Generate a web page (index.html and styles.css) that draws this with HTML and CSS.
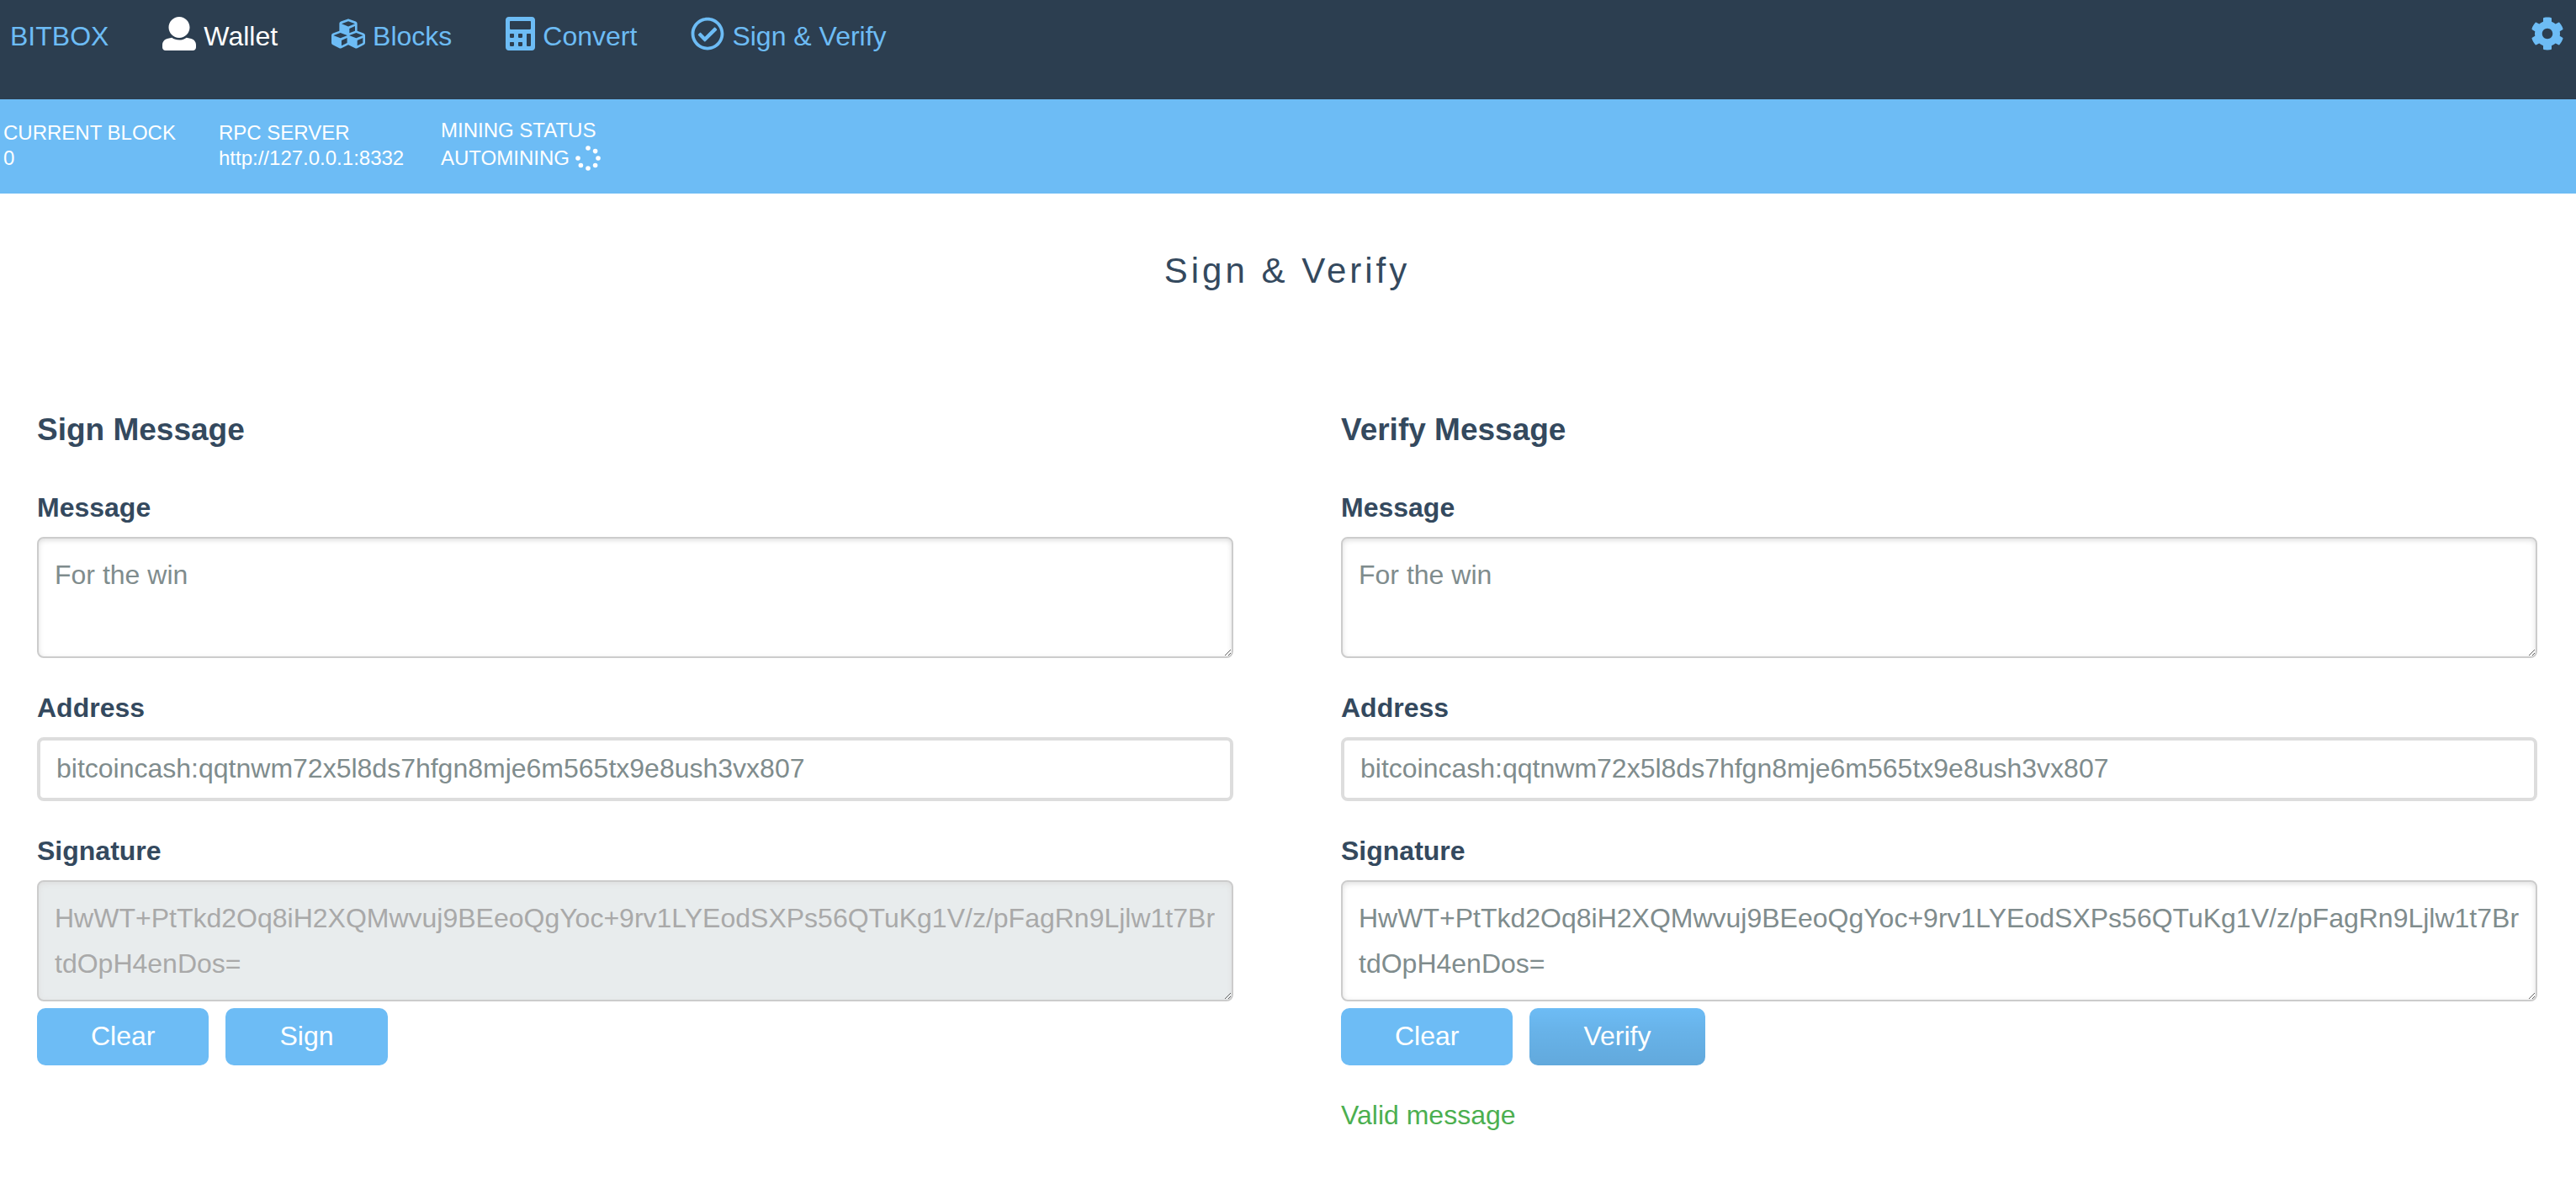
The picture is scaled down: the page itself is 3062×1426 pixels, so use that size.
FILE: index.html
```html
<!DOCTYPE html>
<html lang="en">
<head>
  <meta charset="utf-8">
  <meta name="viewport" content="width=device-width, initial-scale=1">
  <title>BITBOX - Sign &amp; Verify</title>
  <link rel="stylesheet" href="styles.css">
</head>
<body>
  <nav class="nav" aria-label="Main">
    <ul class="nav-list">
      <li><a class="nav-link" href="#home">BITBOX</a></li>
      <li>
        <a class="nav-link nav-link-current" href="#wallet">
          <svg class="icon" viewBox="0 0 512 512" aria-hidden="true"><path d="M256 0c88.366 0 160 71.634 160 160s-71.634 160-160 160S96 248.366 96 160 167.634 0 256 0zm183.283 333.821l-71.313-17.828c-74.923 53.89-165.738 41.864-223.94 0l-71.313 17.828C29.981 344.505 0 382.903 0 426.955V464c0 26.51 21.49 48 48 48h416c26.51 0 48-21.49 48-48v-37.045c0-44.052-29.981-82.45-72.717-93.134z"/></svg>
          <span>Wallet</span>
        </a>
      </li>
      <li>
        <a class="nav-link" href="#blocks">
          <svg class="icon" viewBox="0 0 512 512" aria-hidden="true"><path d="M488.6 250.2L392 214V105.5c0-15-9.3-28.4-23.4-33.7l-100-37.5c-8.1-3.1-17.1-3.1-25.3 0l-100 37.5c-14.1 5.3-23.4 18.7-23.4 33.7V214l-96.6 36.2C9.3 255.5 0 268.9 0 283.9V394c0 13.6 7.7 26.1 19.9 32.2l100 50c10.1 5.1 22.1 5.1 32.2 0l103.9-52 103.9 52c10.1 5.1 22.1 5.1 32.2 0l100-50c12.2-6.1 19.9-18.6 19.9-32.2V283.9c0-15-9.3-28.4-23.4-33.7zM358 214.8l-85 31.9v-68.2l85-37v73.3zM154 104.1l102-38.2 102 38.2v.6l-102 41.4-102-41.4v-.6zm84 291.1l-85 42.5v-79.1l85-38.8v75.4zm0-112l-102 41.4-102-41.4v-.6l102-38.2 102 38.2v.6zm240 112l-85 42.5v-79.1l85-38.8v75.4zm0-112l-102 41.4-102-41.4v-.6l102-38.2 102 38.2v.6z"/></svg>
          <span>Blocks</span>
        </a>
      </li>
      <li>
        <a class="nav-link" href="#convert">
          <svg class="icon icon-narrow" viewBox="0 0 448 512" aria-hidden="true"><path fill-rule="evenodd" d="M48 0h352c26 0 48 22 48 48v416c0 26-22 48-48 48H48c-26 0-48-22-48-48V48C0 22 22 0 48 0zM76 64c-6 0-12 6-12 12v104c0 6 6 12 12 12h296c6 0 12-6 12-12V76c0-6-6-12-12-12zM76 256c-6 0-12 6-12 12v40c0 6 6 12 12 12h40c6 0 12-6 12-12v-40c0-6-6-12-12-12zM204 256c-6 0-12 6-12 12v40c0 6 6 12 12 12h40c6 0 12-6 12-12v-40c0-6-6-12-12-12zM332 256c-6 0-12 6-12 12v168c0 6 6 12 12 12h40c6 0 12-6 12-12V268c0-6-6-12-12-12zM76 384c-6 0-12 6-12 12v40c0 6 6 12 12 12h40c6 0 12-6 12-12v-40c0-6-6-12-12-12zM204 384c-6 0-12 6-12 12v40c0 6 6 12 12 12h40c6 0 12-6 12-12v-40c0-6-6-12-12-12z"/></svg>
          <span>Convert</span>
        </a>
      </li>
      <li>
        <a class="nav-link" href="#sign-verify">
          <svg class="icon" viewBox="0 0 512 512" aria-hidden="true"><path d="M256 8C119.033 8 8 119.033 8 256s111.033 248 248 248 248-111.033 248-248S392.967 8 256 8zm0 48c110.532 0 200 89.451 200 200 0 110.532-89.451 200-200 200-110.532 0-200-89.451-200-200 0-110.532 89.451-200 200-200m140.204 130.267l-22.536-22.718c-4.667-4.705-12.265-4.736-16.97-.068L215.346 303.697l-59.792-60.277c-4.667-4.705-12.265-4.736-16.97-.069l-22.719 22.536c-4.705 4.667-4.736 12.265-.068 16.971l90.781 91.516c4.667 4.705 12.265 4.736 16.97.068l172.589-171.204c4.704-4.668 4.734-12.266.067-16.971z"/></svg>
          <span>Sign &amp; Verify</span>
        </a>
      </li>
    </ul>
    <a class="nav-link" href="#configuration" aria-label="Configuration">
      <svg class="icon" viewBox="0 0 512 512" aria-hidden="true"><path d="M444.788 291.1l42.616 24.599c4.867 2.809 7.126 8.618 5.459 13.985-11.07 35.642-29.97 67.842-54.689 94.586a12.016 12.016 0 0 1-14.832 2.254l-42.584-24.595a191.577 191.577 0 0 1-60.759 35.13v49.182a12.01 12.01 0 0 1-9.377 11.718c-34.956 7.85-72.499 8.256-109.219.007-5.49-1.233-9.403-6.096-9.403-11.723v-49.184a191.555 191.555 0 0 1-60.759-35.13l-42.584 24.595a12.016 12.016 0 0 1-14.832-2.254c-24.718-26.744-43.619-58.944-54.689-94.586-1.667-5.366.592-11.175 5.459-13.985L67.212 291.1a193.48 193.48 0 0 1 0-70.199l-42.616-24.599c-4.867-2.809-7.126-8.618-5.459-13.985 11.07-35.642 29.97-67.842 54.689-94.586a12.016 12.016 0 0 1 14.832-2.254l42.584 24.595a191.577 191.577 0 0 1 60.759-35.13V25.759a12.01 12.01 0 0 1 9.377-11.718c34.956-7.85 72.499-8.256 109.219-.007 5.49 1.233 9.403 6.096 9.403 11.723v49.184a191.555 191.555 0 0 1 60.759 35.13l42.584-24.595a12.016 12.016 0 0 1 14.832 2.254c24.718 26.744 43.619 58.944 54.689 94.586 1.667 5.366-.592 11.175-5.459 13.985L444.788 220.9a193.485 193.485 0 0 1 0 70.2zM336 256c0-44.112-35.888-80-80-80s-80 35.888-80 80 35.888 80 80 80 80-35.888 80-80z"/></svg>
    </a>
  </nav>

  <section class="status" aria-label="Status">
    <div class="status-item">
      <span>CURRENT BLOCK</span>
      <span>0</span>
    </div>
    <div class="status-item">
      <span>RPC SERVER</span>
      <span>http://127.0.0.1:8332</span>
    </div>
    <div class="status-item">
      <span>MINING STATUS</span>
      <span class="status-mining">
        AUTOMINING
        <svg class="spinner" viewBox="0 0 30 30" aria-hidden="true">
          <circle cx="15" cy="3" r="2.8"/>
          <circle cx="23.6" cy="6.6" r="2.8"/>
          <circle cx="27" cy="15" r="2.8"/>
          <circle cx="23.6" cy="23.5" r="2.8"/>
          <circle cx="15" cy="27" r="2.8"/>
          <circle cx="6.4" cy="23.5" r="2.8"/>
          <circle cx="3" cy="15" r="2.8"/>
        </svg>
      </span>
    </div>
  </section>

  <main class="main">
    <h1 class="page-title">Sign &amp; Verify</h1>
    <div class="columns">
      <form class="form">
        <h2 class="form-title">Sign Message</h2>
        <label class="label" for="sign-message">Message</label>
        <textarea class="textarea" id="sign-message" rows="2" spellcheck="false">For the win</textarea>
        <label class="label" for="sign-address">Address</label>
        <input class="input" id="sign-address" type="text" value="bitcoincash:qqtnwm72x5l8ds7hfgn8mje6m565tx9e8ush3vx807">
        <label class="label" for="sign-signature">Signature</label>
        <textarea class="textarea" id="sign-signature" rows="2" disabled>HwWT+PtTkd2Oq8iH2XQMwvuj9BEeoQgYoc+9rv1LYEodSXPs56QTuKg1V/z/pFagRn9Ljlw1t7BrtdOpH4enDos=</textarea>
        <div class="actions">
          <button class="button" type="button">Clear</button>
          <button class="button" type="button">Sign</button>
        </div>
      </form>

      <form class="form">
        <h2 class="form-title">Verify Message</h2>
        <label class="label" for="verify-message">Message</label>
        <textarea class="textarea" id="verify-message" rows="2" spellcheck="false">For the win</textarea>
        <label class="label" for="verify-address">Address</label>
        <input class="input" id="verify-address" type="text" value="bitcoincash:qqtnwm72x5l8ds7hfgn8mje6m565tx9e8ush3vx807">
        <label class="label" for="verify-signature">Signature</label>
        <textarea class="textarea" id="verify-signature" rows="2" spellcheck="false">HwWT+PtTkd2Oq8iH2XQMwvuj9BEeoQgYoc+9rv1LYEodSXPs56QTuKg1V/z/pFagRn9Ljlw1t7BrtdOpH4enDos=</textarea>
        <div class="actions">
          <button class="button" type="button">Clear</button>
          <button class="button button-highlight" type="button">Verify</button>
        </div>
        <p class="success" role="status">Valid message</p>
      </form>
    </div>
  </main>
</body>
</html>
```
FILE: styles.css
```css
* {
  box-sizing: border-box;
}

body {
  margin: 0;
  background: #fff;
  color: #34495e;
  font-family: "Liberation Sans", Arial, sans-serif;
  font-size: 32px;
  line-height: 54px;
}

.nav {
  display: flex;
  justify-content: space-between;
  align-items: flex-start;
  min-height: 118px;
  padding: 20px 14px 0 12px;
  background: #2c3e50;
}

.nav-list {
  display: flex;
  gap: 64px;
  margin: 0;
  padding: 0;
  list-style: none;
}

.nav-link {
  display: flex;
  gap: 9px;
  color: #6dbcf5;
  line-height: 46px;
  text-decoration: none;
}

.nav-link-current {
  color: #fff;
}

.icon {
  width: 40px;
  height: 40px;
  fill: currentColor;
}

.icon-narrow {
  width: 35px;
}

.status {
  display: grid;
  grid-template-columns: 256px 264px auto;
  align-items: center;
  min-height: 112px;
  padding: 0 4px 2px;
  background: #6dbcf5;
  color: #fff;
  font-size: 24px;
  line-height: 30px;
}

.status-item {
  display: flex;
  flex-direction: column;
}

.status-mining {
  display: flex;
  align-items: center;
  gap: 7px;
  line-height: 36px;
}

.spinner {
  width: 30px;
  height: 30px;
  fill: currentColor;
}

.main {
  padding: 65px 46px 64px 44px;
}

.page-title {
  margin: 0 0 135px;
  font-size: 42px;
  font-weight: 400;
  letter-spacing: 4px;
  text-align: center;
}

.columns {
  display: grid;
  grid-template-columns: 1fr 1fr;
  gap: 128px;
}

.form {
  display: flex;
  flex-direction: column;
}

.form-title {
  margin: 0 0 6px;
  font-size: 37px;
}

.label {
  margin: 32px 0 8px;
  font-weight: 700;
}

.input,
.textarea {
  width: 100%;
  border-radius: 8px;
  background: #fff;
  color: #7f8c8d;
  font: inherit;
}

.input {
  height: 76px;
  padding: 0 19px 2px;
  border: 4px solid #ddd;
}

.textarea {
  padding: 16px 19px;
  border: 2px solid #ccc;
  box-shadow: inset 0 2px 6px #ddd;
  overflow: hidden;
  resize: both;
}

.textarea:disabled {
  background: #e8eced;
  color: #a9a9a9;
}

.actions {
  display: flex;
  gap: 20px;
  margin-top: 8px;
}

.button {
  height: 68px;
  padding: 0 64px 2px;
  border: 0;
  border-radius: 10px;
  background: #6dbcf5;
  color: #fff;
  font: inherit;
}

.button-highlight,
.button:hover {
  background-image: linear-gradient(transparent, rgba(0, 0, 0, 0.05) 40%, rgba(0, 0, 0, 0.1));
}

.success {
  margin: 32px 0 0;
  color: #4caf50;
}
```
